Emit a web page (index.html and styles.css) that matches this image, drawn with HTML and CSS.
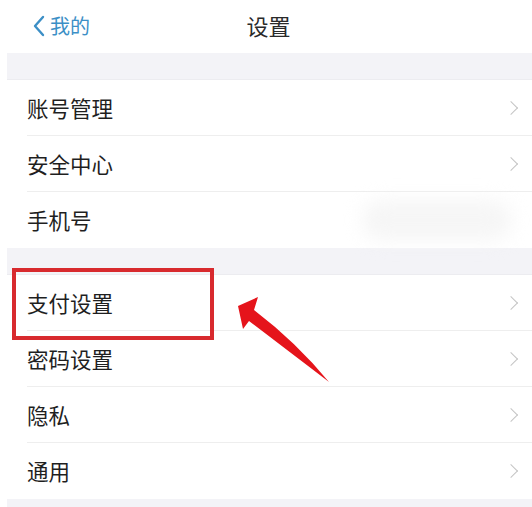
FILE: index.html
```html
<!DOCTYPE html>
<html lang="zh">
<head>
<meta charset="utf-8">
<link rel="stylesheet" href="styles.css">
</head>
<body>
<div class="page">
  <header class="nav">
    <div class="back">
      <svg class="back-icon" width="14" height="22" viewBox="0 0 14 22"><path d="M11 2 L3 11 L11 20" fill="none" stroke="#3c8fc6" stroke-width="2.4" stroke-linecap="round" stroke-linejoin="round"/></svg>
      <span class="back-text">我的</span>
    </div>
    <div class="title">设置</div>
  </header>
  <div class="band"></div>
  <ul class="group">
    <li class="row"><span class="label">账号管理</span><span class="chev"></span></li>
    <li class="row"><span class="label">安全中心</span><span class="chev"></span></li>
    <li class="row"><span class="label">手机号</span><span class="blur"></span></li>
  </ul>
  <div class="band"></div>
  <ul class="group">
    <li class="row"><span class="label">支付设置</span><span class="chev"></span></li>
    <li class="row"><span class="label">密码设置</span><span class="chev"></span></li>
    <li class="row"><span class="label">隐私</span><span class="chev"></span></li>
    <li class="row"><span class="label">通用</span><span class="chev"></span></li>
  </ul>
  <div class="band"></div>
  <div class="highlight"></div>
  <svg class="arrow" width="532" height="507" viewBox="0 0 532 507">
    <path d="M238,306 L258,297 L254,310 Q296,342 329,382 Q287,350 249,321 L243,329 Z" fill="#e5141b"/>
  </svg>
</div>
</body>
</html>
```
FILE: styles.css
```css
html, body {
  margin: 0;
  padding: 0;
  background: #ffffff;
}
.page {
  position: relative;
  width: 532px;
  height: 507px;
  overflow: hidden;
  font-family: "Noto Sans CJK SC", "Noto Sans", sans-serif;
  color: #222222;
}
.nav {
  height: 53px;
  position: relative;
  display: flex;
  align-items: flex-start;
  justify-content: center;
}
.back {
  position: absolute;
  left: 32px;
  top: 14px;
  display: flex;
  align-items: center;
  gap: 4px;
}
.back-icon {
  display: block;
}
.back-text {
  font-size: 20px;
  line-height: 24px;
  color: #3c8fc6;
}
.title {
  font-size: 22px;
  line-height: 26px;
  color: #2a2a2a;
  margin-left: 5px;
  margin-top: 12px;
}
.band {
  height: 26px;
  margin-left: 7px;
  background: #f3f3f7;
  border-bottom: 1px solid #ececf0;
}
.band:last-child {
  border-bottom: none;
}
.group {
  list-style: none;
  margin: 0;
  padding: 0 0 0 27px;
  background: #fff;
}
.row {
  height: 55px;
  display: flex;
  align-items: center;
  justify-content: space-between;
  border-bottom: 1px solid #eeeeee;
  position: relative;
}
.row:last-child {
  border-bottom: none;
  height: 56px;
}
.label {
  font-size: 21.5px;
  line-height: 26px;
  color: #1f1f1f;
}
.chev {
  width: 9px;
  height: 9px;
  border-top: 1.6px solid #c4c4c4;
  border-right: 1.6px solid #c4c4c4;
  transform: rotate(45deg);
  margin-right: 16px;
}
.blur {
  position: absolute;
  right: 20px;
  top: 8px;
  width: 150px;
  height: 40px;
  background: #f6f6f6;
  border-radius: 20px;
  filter: blur(9px);
}
.highlight {
  position: absolute;
  left: 12px;
  top: 268px;
  width: 194px;
  height: 64px;
  border: 4px solid #d82a2e;
}
.arrow {
  position: absolute;
  left: 0;
  top: 0;
}
```
